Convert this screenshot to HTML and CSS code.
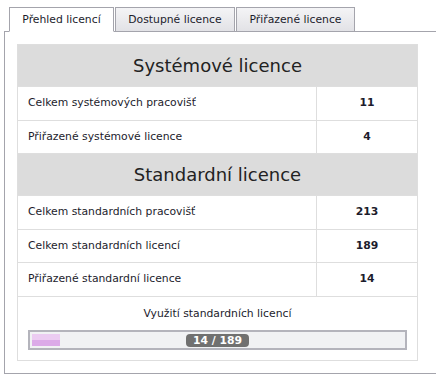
FILE: index.html
```html
<!DOCTYPE html>
<html lang="cs">
<head>
    <meta charset="UTF-8">
    <title>Přehled licencí</title>
    <link rel="stylesheet" href="styles.css">
</head>
<body>
    <div class="tabs">
        <ul class="tab-nav">
            <li class="tab active">Přehled licencí</li>
            <li class="tab">Dostupné licence</li>
            <li class="tab">Přiřazené licence</li>
        </ul>
        <div class="tab-panel">
            <table class="lic-table">
                <tr><th colspan="2">Systémové licence</th></tr>
                <tr><td>Celkem systémových pracovišť</td><td class="val">11</td></tr>
                <tr><td>Přiřazené systémové licence</td><td class="val">4</td></tr>
                <tr><th colspan="2">Standardní licence</th></tr>
                <tr><td>Celkem standardních pracovišť</td><td class="val">213</td></tr>
                <tr><td>Celkem standardních licencí</td><td class="val">189</td></tr>
                <tr><td>Přiřazené standardní licence</td><td class="val">14</td></tr>
                <tr>
                    <td colspan="2" class="usage">
                        <div class="usage-title">Využití standardních licencí</div>
                        <div class="progress">
                            <div class="progress-fill" style="width: 7.4%"></div>
                            <span class="progress-label">14 / 189</span>
                        </div>
                    </td>
                </tr>
            </table>
        </div>
    </div>
</body>
</html>
```

FILE: styles.css
```css
body {
    margin: 0;
    padding: 7px 0 0 4px;
    font-family: "DejaVu Sans", Verdana, sans-serif;
    font-size: 10.8px;
    color: #1c1c2c;
    background: #fff;
    overflow: hidden;
}
.tab-nav {
    list-style: none;
    margin: 0 0 0 5px;
    padding: 0;
    display: flex;
    position: relative;
    z-index: 1;
}
.tab {
    height: 23px;
    line-height: 23px;
    text-align: center;
    border: 1px solid #a4a4ac;
    margin-right: 1px;
    margin-bottom: -1px;
    background: linear-gradient(#f4f4f6, #e2e2e6);
    color: #1c1c2c;
}
.tab:nth-child(1) { width: 103px; }
.tab:nth-child(2) { width: 118px; }
.tab:nth-child(3) { width: 117px; }
.tab.active {
    background: #fff;
    border-bottom-color: #fff;
}
.tab-panel {
    width: 440px;
    border: 1px solid #a4a4ac;
    padding: 12px;
    box-sizing: border-box;
}
.lic-table {
    width: 400px;
    border-collapse: collapse;
    border: 1px solid #dedede;
}
.lic-table th {
    background: #dcdcdc;
    line-height: 41px;
    padding: 0;
    font-size: 18px;
    font-weight: normal;
    color: #222;
    border: 1px solid #dedede;
}
.lic-table td {
    line-height: 32.5px;
    padding: 0 10px;
    border: 1px solid #dedede;
}
.lic-table td.val {
    width: 80px;
    text-align: center;
    font-weight: bold;
}
.lic-table td.usage {
    padding: 10px 10px 10px;
    line-height: normal;
}
.usage-title {
    text-align: center;
    height: 13px;
    line-height: 13px;
    margin-bottom: 10px;
}
.progress {
    position: relative;
    height: 16px;
    border: 2px solid #b4b4bc;
    background: #f1f2f4;
    width: 375px;
}
.progress-fill {
    height: 12px;
    margin: 2px 0 0 2px;
    background: linear-gradient(#ecccf2 0, #ecccf2 50%, #dcaae8 50%, #dcaae8 100%);
}
.progress-label {
    position: absolute;
    left: 156px;
    top: 2px;
    width: 63px;
    height: 13px;
    line-height: 13px;
    border-radius: 4px;
    background: #707070;
    color: #fff;
    font-weight: bold;
    text-align: center;
    font-size: 10.8px;
}
```
